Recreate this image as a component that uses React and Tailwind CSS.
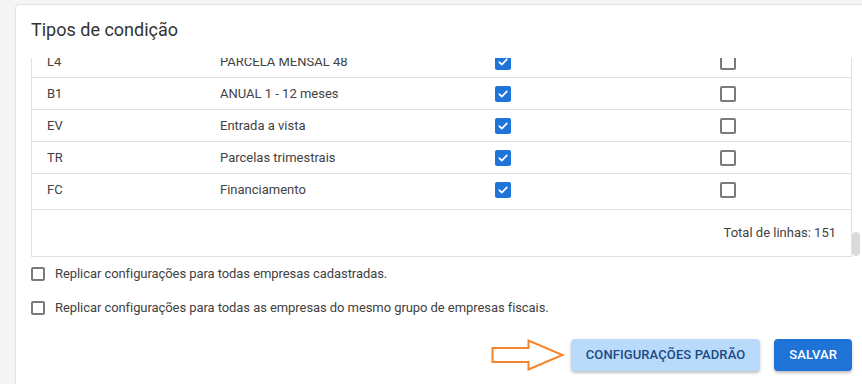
import React from 'react';

const rows = [
  { code: 'L4', desc: 'PARCELA MENSAL 48', a: true, b: false },
  { code: 'B1', desc: 'ANUAL 1 - 12 meses', a: true, b: false },
  { code: 'EV', desc: 'Entrada a vista', a: true, b: false },
  { code: 'TR', desc: 'Parcelas trimestrais', a: true, b: false },
  { code: 'FC', desc: 'Financiamento', a: true, b: false },
];

function Check({ checked, size = 16 }) {
  if (checked) {
    return (
      <span
        className="flex items-center justify-center rounded-[2px] bg-[#1f74d8]"
        style={{ width: size, height: size }}
      >
        <svg width="12" height="12" viewBox="0 0 12 12" fill="none">
          <path d="M2.3 6.2 L4.8 8.6 L9.8 3.4" stroke="#fff" strokeWidth="1.7" strokeLinecap="round" strokeLinejoin="round" />
        </svg>
      </span>
    );
  }
  return (
    <span
      className="block rounded-[2px] border-2 border-[#7a7a7a] bg-white"
      style={{ width: size, height: size }}
    />
  );
}

function Arrow() {
  return (
    <svg width="74" height="32" viewBox="0 0 74 32" fill="none">
      <polygon
        points="1.5,9 37.5,9 37.5,1.5 71.5,16 37.5,30.5 37.5,23 1.5,23"
        stroke="#f5842a"
        strokeWidth="2"
        strokeLinejoin="miter"
        fill="none"
      />
    </svg>
  );
}

export default function App() {
  return (
    <div className="h-[384px] w-[862px] overflow-hidden bg-[#f5f5f5] pl-[15px] pt-[4px] font-['Roboto',sans-serif] text-[13px] text-[#424242]">
      <div className="h-[400px] w-[853px] rounded-[4px] border border-[#e2e2e2] bg-white px-[15px] pt-[13px]">
        <h2 className="text-[18px] leading-[24px] text-[#333]">Tipos de condição</h2>

        <div className="relative mt-[16px] border-x border-b border-[#e0e0e0]">
          {/* scrolled list, first row partly hidden */}
          <div className="h-[151px] overflow-hidden">
            <div className="-mt-[12px]">
              {rows.map((r, i) => (
                <div
                  key={r.code}
                  className={
                    'grid h-[32px] grid-cols-[173px_275px_225px_1fr] items-center pl-[15px] ' +
                    (i < rows.length - 1 ? 'border-b border-[#e0e0e0]' : '')
                  }
                >
                  <span>{r.code}</span>
                  <span>{r.desc}</span>
                  <span><Check checked={r.a} /></span>
                  <span><Check checked={r.b} /></span>
                </div>
              ))}
            </div>
          </div>
          <div className="flex h-[47px] items-center justify-end border-t border-[#e0e0e0] pr-[15px]">
            Total de linhas: 151
          </div>
          <div className="absolute -right-[9px] top-[174px] h-[24px] w-[8px] rounded-[4px] bg-[#dadada]" />
        </div>

        <div className="flex flex-col tracking-[-0.07px]">
          <label className="flex h-[34px] items-center gap-[10px]">
            <Check checked={false} size={14} />
            <span>Replicar configurações para todas empresas cadastradas.</span>
          </label>
          <label className="flex h-[34px] items-center gap-[10px]">
            <Check checked={false} size={14} />
            <span>Replicar configurações para todas as empresas do mesmo grupo de empresas fiscais.</span>
          </label>
        </div>

        <div className="mt-[14px] flex items-center justify-end">
          <Arrow />
          <button className="ml-[6px] h-[32px] rounded-[4px] bg-[#b9dafb] px-[15px] text-[13px] font-medium tracking-[0.1px] text-[#1b4a84] shadow-[0_2px_3px_rgba(0,0,0,0.25)]">
            CONFIGURAÇÕES PADRÃO
          </button>
          <button className="ml-[14px] h-[32px] rounded-[4px] bg-[#1f72d6] px-[15px] text-[13px] font-medium tracking-[0.1px] text-white shadow-[0_2px_3px_rgba(0,0,0,0.25)]">
            SALVAR
          </button>
        </div>
      </div>
    </div>
  );
}
